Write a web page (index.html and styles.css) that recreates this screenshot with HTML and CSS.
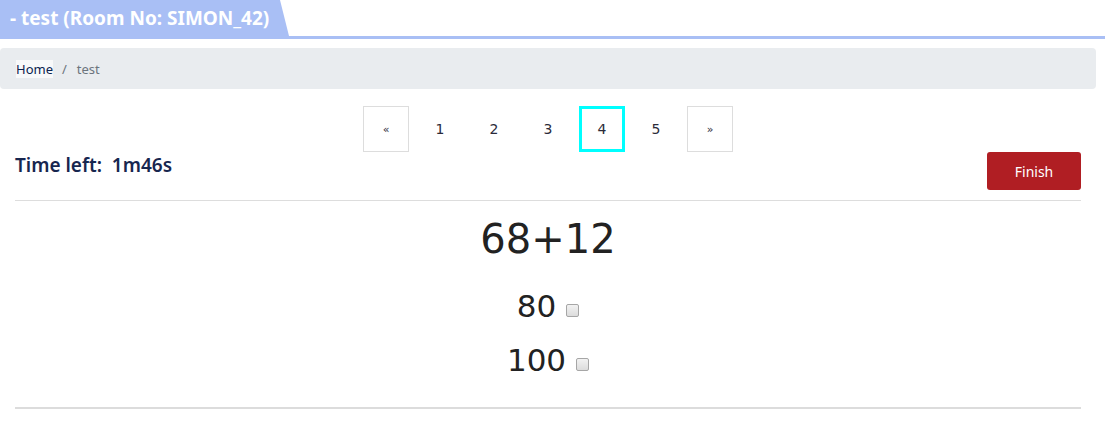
FILE: index.html
```html
<!DOCTYPE html>
<html>
<head>
<meta charset="utf-8">
<link rel="stylesheet" href="styles.css">
</head>
<body>
<header class="topbar">
  <div class="banner">- test (Room No: SIMON_42)</div>
</header>
<nav class="crumbs">
  <a class="crumb-link" href="#">Home</a>
  <span class="crumb-sep">/</span>
  <span class="crumb-current">test</span>
</nav>
<main class="quiz">
  <ul class="pager">
    <li class="page boxed">&laquo;</li>
    <li class="page">1</li>
    <li class="page">2</li>
    <li class="page">3</li>
    <li class="page current">4</li>
    <li class="page">5</li>
    <li class="page boxed">&raquo;</li>
  </ul>
  <div class="status">
    <div class="timer">Time left:&nbsp; 1m46s</div>
    <button class="finish">Finish</button>
  </div>
  <div class="question">
    <div class="expr">68+12</div>
    <label class="option">80 <input type="checkbox" class="check"></label>
    <label class="option">100 <input type="checkbox" class="check"></label>
  </div>
</main>
</body>
</html>
```
FILE: styles.css
```css
html, body {
  margin: 0;
  padding: 0;
  background: #fff;
  font-family: "Noto Sans", "Open Sans", sans-serif;
}
.topbar {
  height: 36px;
  border-bottom: 3px solid #a9bff5;
}
.banner {
  width: 289px;
  height: 36px;
  box-sizing: border-box;
  background: #a9bff5;
  clip-path: polygon(0 0, 280px 0, 100% 100%, 0 100%);
  color: #fff;
  font-weight: 700;
  font-size: 19px;
  line-height: 36px;
  padding-left: 10px;
  white-space: nowrap;
}
.crumbs {
  margin: 9px 9px 0 0;
  height: 41px;
  background: #e9ecef;
  border-radius: 4px;
  display: flex;
  align-items: center;
  padding-left: 16px;
  font-size: 13px;
  color: #6c757d;
}
.crumb-link {
  color: #0b2350;
  text-decoration: none;
  background: #f8f9fa;
}
.crumb-sep {
  margin: 0 10px 0 9px;
}
.quiz {
  margin: 0 24px 0 15px;
  padding-top: 17px;
  border-bottom: 2px solid #dcdcdc;
}
.pager {
  list-style: none;
  margin: 0;
  padding: 0;
  display: flex;
  justify-content: center;
  gap: 8px;
}
.page {
  width: 46px;
  height: 46px;
  box-sizing: border-box;
  display: flex;
  align-items: center;
  justify-content: center;
  font-family: "DejaVu Sans", sans-serif;
  font-size: 14px;
  color: #2b2b3a;
}
.page.boxed {
  border: 1px solid #dddddd;
  font-size: 11px;
}
.page.current {
  border: 3px solid #00ffff;
}
.status {
  display: flex;
  justify-content: space-between;
  align-items: flex-start;
  border-bottom: 1px solid #dddddd;
  padding-bottom: 10px;
}
.timer {
  font-size: 19px;
  font-weight: 600;
  color: #17264f;
  line-height: 24px;
  margin-top: 1px;
}
.finish {
  width: 94px;
  height: 38px;
  border: none;
  border-radius: 3px;
  background: #b01e23;
  color: #fff;
  font-family: "Noto Sans", sans-serif;
  font-size: 14px;
}
.question {
  display: flex;
  flex-direction: column;
  align-items: center;
  font-family: "DejaVu Sans", sans-serif;
  color: #222;
  padding: 12px 0 27px;
}
.expr {
  font-size: 40px;
  line-height: 52px;
  margin-bottom: 7px;
}
.option {
  font-size: 31px;
  line-height: 40px;
  margin-top: 14px;
  display: flex;
  align-items: center;
}
.check {
  appearance: none;
  -webkit-appearance: none;
  width: 13px;
  height: 13px;
  box-sizing: border-box;
  border: 1px solid #a6a6a6;
  border-radius: 2px;
  background: linear-gradient(#f2f2f2, #dcdcdc);
  margin: 8px 0 0 10px;
}
```
